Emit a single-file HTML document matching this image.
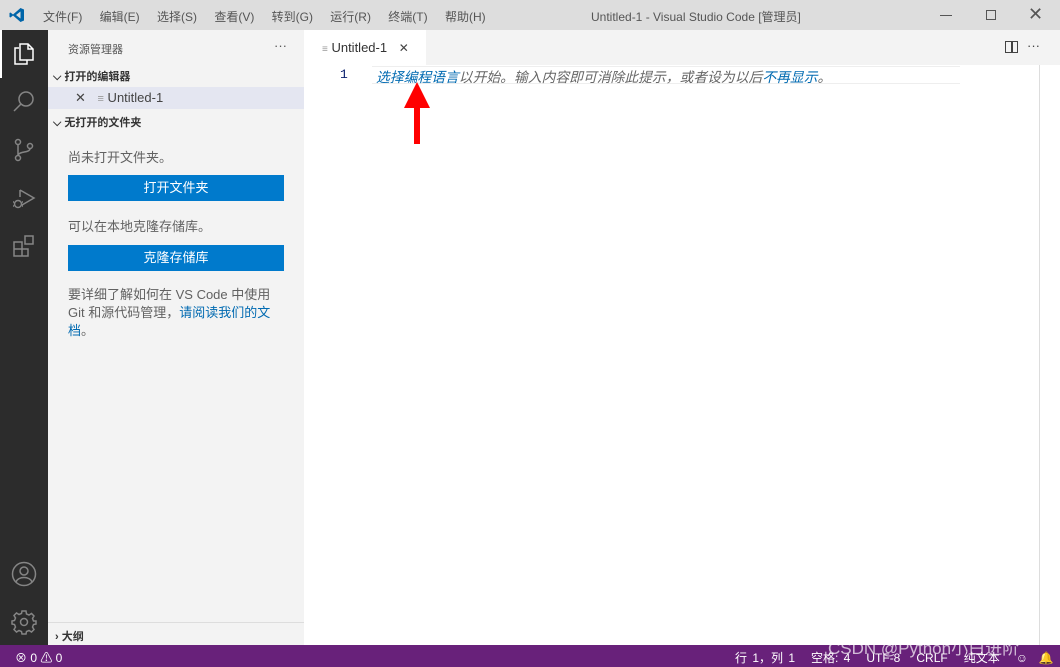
<!DOCTYPE html>
<html><head><meta charset="utf-8"><style>
*{margin:0;padding:0;box-sizing:border-box}
body{width:1060px;height:667px;overflow:hidden;position:relative;background:#fff;font-family:"Liberation Sans","Noto Sans CJK SC",sans-serif;font-size:13px;color:#616161}
.a{position:absolute;white-space:nowrap}
#title{left:0;top:0;width:1060px;height:30px;background:#dddddd}
#act{left:0;top:30px;width:48px;height:615px;background:#2c2c2c}
#side{left:48px;top:30px;width:256px;height:615px;background:#f3f3f3}
#tabs{left:304px;top:30px;width:756px;height:35px;background:#f3f3f3}
#status{left:0;top:645px;width:1060px;height:22px;background:#68217a;color:#fff;font-size:12px}
.btn{position:absolute;left:68px;width:216px;height:26px;background:#007acc;color:#fff;text-align:center;line-height:26px;font-size:13px}
.ic{position:absolute;stroke:#858585;fill:none;stroke-width:1.5}
</style></head><body>
<div class="a" id="title"></div>
<svg class="a" style="left:9px;top:7px" width="16" height="16" viewBox="0 0 16 16"><path d="M11.5 1 L15 2.5 V13.5 L11.5 15 L4 8.5 L1.5 10.5 L0.5 10 V6 L1.5 5.5 L4 7.5 Z M11.5 4.5 L7 8 L11.5 11.5Z" fill="#0065a9" fill-rule="evenodd"/></svg>
<div class="a" style="left:43px;top:8px;font-size:12px;color:#555;word-spacing:14px">文件(F) 编辑(E) 选择(S) 查看(V) 转到(G) 运行(R) 终端(T) 帮助(H)</div>
<div class="a" style="left:591px;top:8px;font-size:12px;color:#555">Untitled-1 - Visual Studio Code [管理员]</div>
<div class="a" style="left:940px;top:15px;width:12px;height:1px;background:#555"></div>
<div class="a" style="left:986px;top:10px;width:10px;height:10px;border:1px solid #555"></div>
<div class="a" style="left:1028px;top:4px;font-size:18px;color:#555">✕</div>

<div class="a" id="act"></div>
<div class="a" style="left:0;top:30px;width:2px;height:48px;background:#fff"></div>
<svg class="ic" style="left:12px;top:42px;stroke:#fff" width="24" height="24" viewBox="0 0 24 24"><path d="M7 6 H3 V22 H15 V18 M8 2 H16 L21 7 V18 H8 Z M16 2 V7 H21"/></svg>
<svg class="ic" style="left:12px;top:90px" width="24" height="24" viewBox="0 0 24 24"><circle cx="14" cy="9" r="7"/><path d="M9 14 L2 21"/></svg>
<svg class="ic" style="left:12px;top:138px" width="24" height="24" viewBox="0 0 24 24"><circle cx="6" cy="4" r="2.5"/><circle cx="6" cy="20" r="2.5"/><circle cx="18" cy="8" r="2.5"/><path d="M6 6.5 V17.5 M18 10.5 C18 15 8 13 6 17"/></svg>
<svg class="ic" style="left:12px;top:186px" width="24" height="24" viewBox="0 0 24 24"><path d="M8 4 L22 12 L10 19 M8 4 V11"/><circle cx="6" cy="18" r="3.5"/><path d="M2 16 H1 M10 16 H11 M2 20 H1 M10 20 H11"/></svg>
<svg class="ic" style="left:12px;top:234px" width="24" height="24" viewBox="0 0 24 24"><path d="M2 8 H10 V22 H2 Z M2 15 H16 V22 H10 M13 2 H21 V10 H13 Z"/></svg>
<svg class="ic" style="left:11px;top:561px" width="26" height="26" viewBox="0 0 26 26"><circle cx="13" cy="13" r="11.5"/><circle cx="13" cy="10" r="4"/><path d="M5 21 C7 15 19 15 21 21"/></svg>
<svg class="ic" style="left:11px;top:609px" width="26" height="26" viewBox="0 0 26 26"><circle cx="13" cy="13" r="3.5"/><path d="M11 2 H15 L15.5 5 L18 6 L20.5 4.5 L23 7 L21.5 9.5 L22.5 12 L25 12 V15 L22.5 15.5 L21.5 18 L23 20.5 L20.5 23 L18 21.5 L15.5 22.5 L15 25 H11 L10.5 22.5 L8 21.5 L5.5 23 L3 20.5 L4.5 18 L3.5 15.5 L1 15 V12 L3.5 11.5 L4.5 9 L3 6.5 L5.5 4 L8 5.5 L10.5 4.5 Z"/></svg>

<div class="a" id="side"></div>
<div class="a" style="left:68px;top:41px;font-size:11px;color:#555">资源管理器</div>
<div class="a" style="left:274px;top:38px;font-size:13px;color:#555">···</div>
<div class="a" style="left:53px;top:68px;font-size:11px;font-weight:bold;color:#333">⌵ 打开的编辑器</div>
<div class="a" style="left:48px;top:87px;width:256px;height:22px;background:#e4e6f1"></div>
<div class="a" style="left:75px;top:90px;font-size:13px;color:#444">✕ <span style="color:#999;font-size:11px;margin-left:8px">≡</span> Untitled-1</div>
<div class="a" style="left:53px;top:114px;font-size:11px;font-weight:bold;color:#333">⌵ 无打开的文件夹</div>
<div class="a" style="left:68px;top:147px">尚未打开文件夹。</div>
<div class="btn" style="top:175px">打开文件夹</div>
<div class="a" style="left:68px;top:216px">可以在本地克隆存储库。</div>
<div class="btn" style="top:245px">克隆存储库</div>
<div class="a" style="left:68px;top:286px;line-height:18px;white-space:normal;width:215px">要详细了解如何在 VS Code 中使用 Git 和源代码管理，<span style="color:#006ab1">请阅读我们的文档</span>。</div>
<div class="a" style="left:48px;top:622px;width:256px;height:1px;background:#ddd"></div>
<div class="a" style="left:55px;top:628px;font-size:11px;font-weight:bold;color:#333">› 大纲</div>

<div class="a" id="tabs"></div>
<div class="a" style="left:304px;top:30px;width:122px;height:35px;background:#fff"></div>
<div class="a" style="left:322px;top:40px;color:#333"><span style="color:#999;font-size:10px">≡</span> Untitled-1 <span style="margin-left:8px;color:#444;font-size:12px">✕</span></div>
<div class="a" style="left:1005px;top:41px;width:13px;height:12px;border:1.5px solid #424242"></div>
<div class="a" style="left:1011px;top:41px;width:1.5px;height:12px;background:#424242"></div>
<div class="a" style="left:1027px;top:38px;color:#424242">···</div>
<div class="a" style="left:340px;top:67px;color:#0b216f;font-family:'Liberation Mono',monospace;font-size:13px">1</div>
<div class="a" style="left:372px;top:66px;width:588px;height:18px;border-top:1px solid #eee;border-bottom:1px solid #eee"></div>
<div class="a" style="left:376px;top:66px;font-style:italic;font-size:13.8px;color:#666"><span style="color:#006ab1">选择编程语言</span>以开始。输入内容即可消除此提示，或者设为以后<span style="color:#006ab1">不再显示</span>。</div>
<div class="a" style="left:1039px;top:65px;width:1px;height:580px;background:#ddd"></div>
<svg class="a" style="left:403px;top:82px" width="28" height="64" viewBox="0 0 28 64"><path d="M14 0 L27 26 H17 V62 H11 V26 H1 Z" fill="#f00"/></svg>

<div class="a" id="status"></div>
<div class="a" style="left:15px;top:649px;color:#fff;font-size:12px">⊗ 0 ⚠ 0</div>
<div class="a" style="left:735px;top:649px;color:#fff;font-size:12px;word-spacing:2px">行 1，列 1 &nbsp; 空格: 4 &nbsp; UTF-8 &nbsp; CRLF &nbsp; 纯文本 &nbsp; ☺ &nbsp;🔔</div>
<div class="a" style="left:828px;top:634px;color:rgba(255,255,255,.7);font-size:17px">CSDN @Python小白进阶</div>
</body></html>
